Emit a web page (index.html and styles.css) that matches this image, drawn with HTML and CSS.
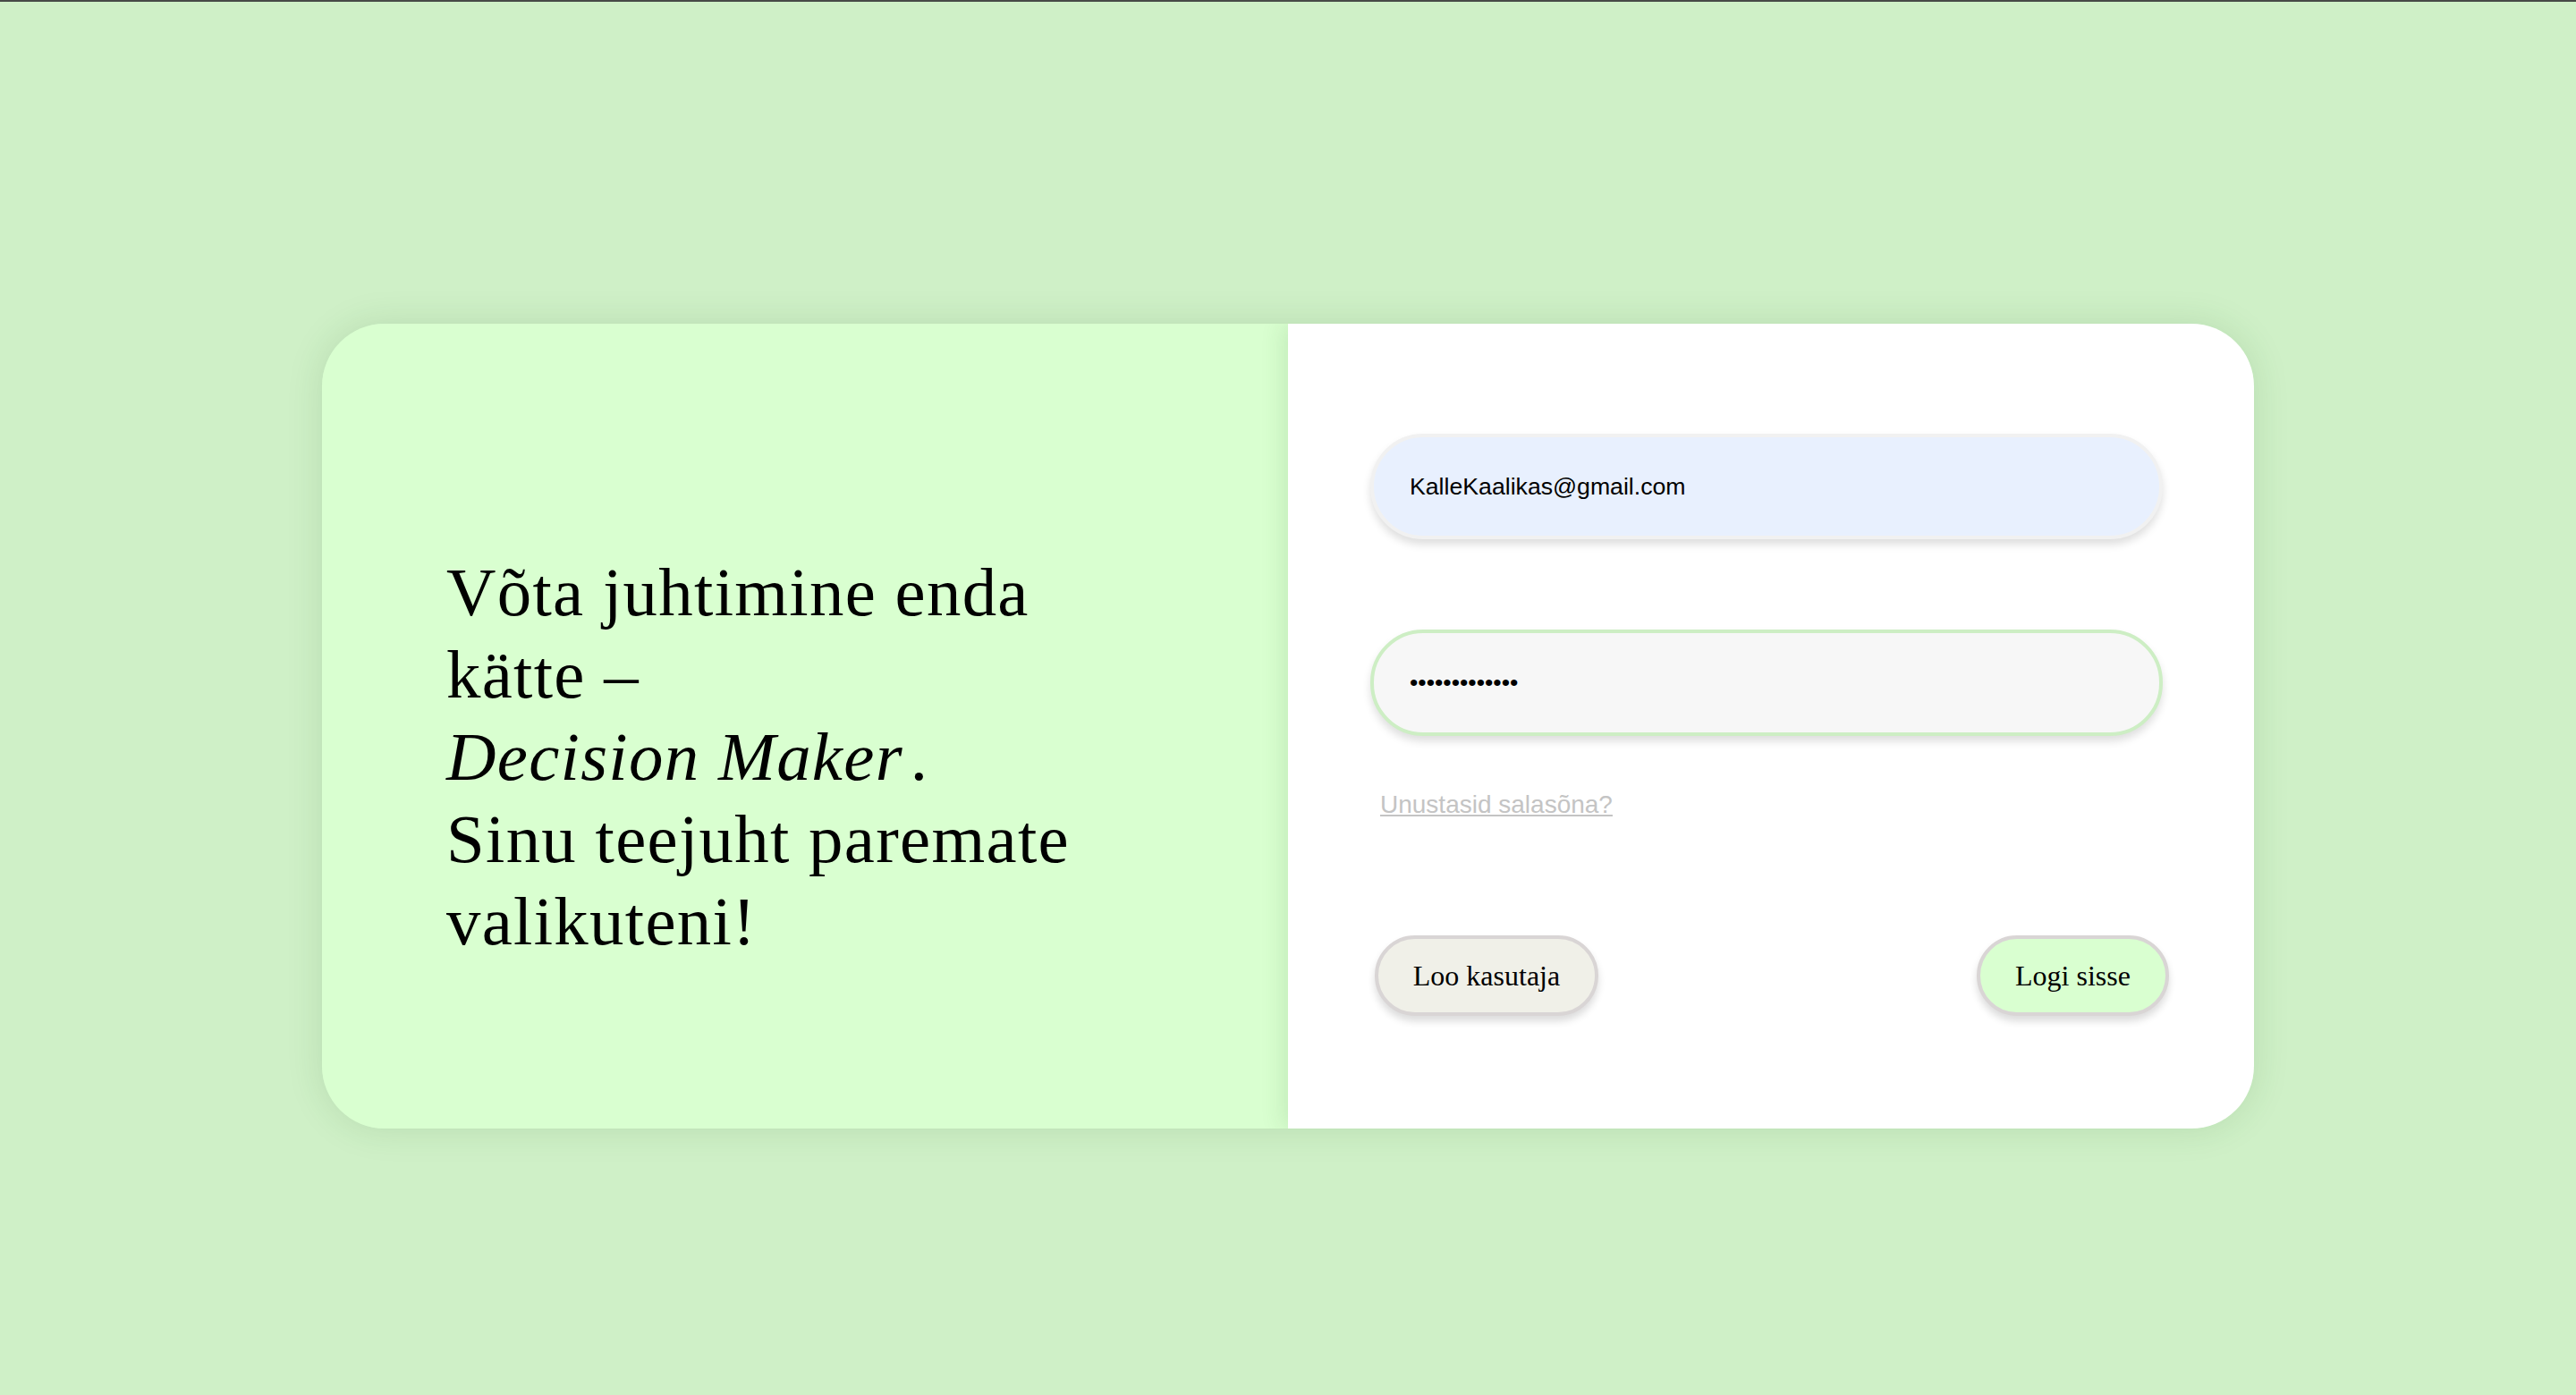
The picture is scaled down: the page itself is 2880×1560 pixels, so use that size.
FILE: index.html
```html
<!DOCTYPE html>
<html lang="et">
<head>
<meta charset="utf-8">
<title>Decision Maker – Logi sisse</title>
<link rel="stylesheet" href="styles.css">
</head>
<body>
<div class="topline"></div>
<main class="card">
  <section class="intro">
    <h1 class="slogan">Võta juhtimine enda<br>kätte –<br><em>Decision Maker</em>.<br>Sinu teejuht paremate<br>valikuteni!</h1>
  </section>
  <section class="login">
    <form class="form">
      <input class="field field-email" type="email" value="KalleKaalikas@gmail.com">
      <input class="field field-password" type="password" value="salasona1234a">
      <div class="forgot"><a href="#">Unustasid salasõna?</a></div>
      <div class="actions">
        <button type="button" class="btn btn-create">Loo kasutaja</button>
        <button type="button" class="btn btn-login">Logi sisse</button>
      </div>
    </form>
  </section>
</main>
</body>
</html>
```
FILE: styles.css
```css
html, body {
  margin: 0;
  padding: 0;
}
body {
  background: #cff0c7;
  min-height: 1560px;
  font-family: "Liberation Serif", "Times New Roman", serif;
}
.topline {
  height: 2px;
  background: #474a47;
}
.card {
  width: 2160px;
  height: 900px;
  margin: 360px auto 0;
  display: flex;
  border-radius: 70px;
  overflow: hidden;
  box-shadow: 0 0 40px rgba(30, 90, 20, 0.13);
}
.intro {
  width: 1080px;
  flex: none;
  background: #d9ffd0;
  padding: 255px 0 0 139px;
  box-sizing: border-box;
}
.slogan {
  margin: 0;
  font-weight: normal;
  font-size: 76.8px;
  line-height: 92px;
  letter-spacing: 1.3px;
  color: #000;
  white-space: nowrap;
}
.slogan em {
  font-style: italic;
  padding-right: 8px;
}
.login {
  flex: 1;
  background: #fff;
  position: relative;
  box-shadow: -6px 0 24px rgba(40, 100, 30, 0.12);
  padding: 123px 102px 0 92px;
  box-sizing: border-box;
}
.form {
  display: flex;
  flex-direction: column;
}
.field {
  display: block;
  width: 886px;
  height: 118px;
  box-sizing: border-box;
  border-radius: 59px;
  border: 4px solid #f1f1f1;
  padding: 0 40px;
  font-family: "Liberation Sans", Arial, sans-serif;
  font-size: 26.67px;
  color: #000;
  outline: none;
  box-shadow: 0 6px 10px rgba(0, 0, 0, 0.13);
}
.field-email {
  background: #e8f0fe;
}
.field-password {
  margin-top: 101px;
  height: 119px;
  background: #f7f7f7;
  border-color: #cdeec4;
}
.forgot {
  margin: 61px 0 0 11px;
  line-height: 32px;
  font-family: "Liberation Sans", Arial, sans-serif;
  font-size: 28px;
}
.forgot a {
  color: #c4c4c4;
  text-decoration: underline;
}
.actions {
  margin: 130px -7px 0 5px;
  display: flex;
  justify-content: space-between;
}
.btn {
  height: 90px;
  box-sizing: border-box;
  border: 4px solid #d9d5d5;
  border-radius: 45px;
  font-family: "Liberation Serif", "Times New Roman", serif;
  font-size: 32px;
  color: #000;
  padding: 0;
  box-shadow: 0 6px 9px rgba(0, 0, 0, 0.14);
  cursor: pointer;
}
.btn-create {
  width: 250px;
  background: #f0f0e8;
}
.btn-login {
  width: 215px;
  background: #d9ffd0;
}
```
